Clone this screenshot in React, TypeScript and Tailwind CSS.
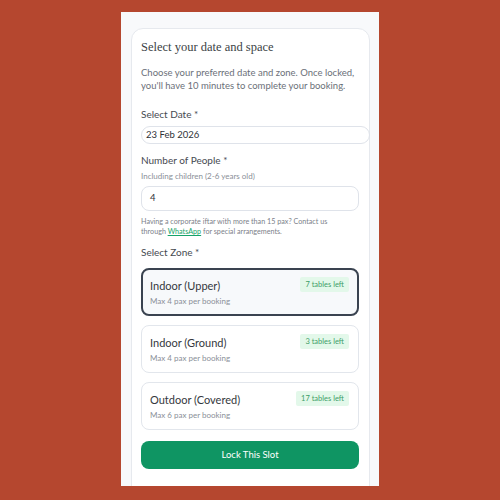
const zones = [
  { name: "Indoor (Upper)", left: "7 tables left", max: "Max 4 pax per booking", selected: true },
  { name: "Indoor (Ground)", left: "3 tables left", max: "Max 4 pax per booking", selected: false },
  { name: "Outdoor (Covered)", left: "17 tables left", max: "Max 6 pax per booking", selected: false },
];

const App = () => {
  return (
    <div className="w-[500px] h-[500px] bg-[#b5472f] flex justify-center pt-[12px]">
      <div className="w-[258px] h-[474px] bg-[#f8f9fb] overflow-hidden pl-[10px] pr-[9px] pt-[16px] font-['Lato',sans-serif]">
        <div className="bg-white border border-[#e6e9ee] rounded-xl pl-[9px] pr-[10px] pt-[8px] pb-4 h-[480px]">
          {/* Header */}
          <h2 className="font-['Liberation_Serif',serif] text-[12.5px] text-[#3c3f45] leading-[20px]">
            Select your date and space
          </h2>
          <p className="mt-[9px] text-[9.5px] leading-[13px] text-[#6b7079]">
            Choose your preferred date and zone. Once locked, you'll have 10 minutes to complete your booking.
          </p>

          {/* Date */}
          <p className="mt-[16px] text-[10px] leading-[13px] text-[#464a51]">Select Date *</p>
          <div className="mt-[5px] w-[229px] h-[18px] border border-[#dfe3ea] rounded-[9px] flex items-center px-[4px] text-[9.5px] text-[#2f3237]">
            23 Feb 2026
          </div>

          {/* People */}
          <p className="mt-[10px] text-[10px] leading-[13px] text-[#464a51]">Number of People *</p>
          <p className="mt-[4px] text-[8px] leading-[10px] text-[#8a8f98]">Including children (2-6 years old)</p>
          <div className="mt-[5px] h-[25px] border border-[#dfe3ea] rounded-lg flex items-center px-[8px] text-[9.5px] text-[#2f3237]">
            4
          </div>
          <p className="mt-[6px] w-[212px] text-[7.2px] leading-[10px] text-[#7c818a]">
            Having a corporate iftar with more than 15 pax? Contact us through{" "}
            <span className="text-[#16a36a] underline">WhatsApp</span> for special arrangements.
          </p>

          {/* Zones */}
          <p className="mt-[9px] text-[10px] leading-[13px] text-[#464a51]">Select Zone *</p>
          <div className="mt-[9px] flex flex-col gap-[9px]">
            {zones.map((z) => (
              <div
                key={z.name}
                className={
                  z.selected
                    ? "h-[48px] rounded-lg border-2 border-[#3a4350] bg-[#f7f9fb] pl-[7px] pr-[8px] pt-[7px]"
                    : "h-[48px] rounded-lg border border-[#e2e6ec] bg-white pl-[8px] pr-[9px] pt-[8px]"
                }
              >
                <div className="flex items-start justify-between">
                  <span className="text-[11px] leading-[15px] text-[#35383d] mt-[1px]">{z.name}</span>
                  <span className="bg-[#e3f8ea] text-[#3e9e68] text-[7.5px] leading-[15px] px-[5px] rounded-[2px]">
                    {z.left}
                  </span>
                </div>
                <p className="mt-[3px] text-[8px] leading-[10px] text-[#8a8f98]">{z.max}</p>
              </div>
            ))}
          </div>

          <button className="mt-[11px] w-full h-[28px] rounded-lg bg-[#0f9563] text-white text-[9.5px]">
            Lock This Slot
          </button>
        </div>
      </div>
    </div>
  );
};

export default App;
